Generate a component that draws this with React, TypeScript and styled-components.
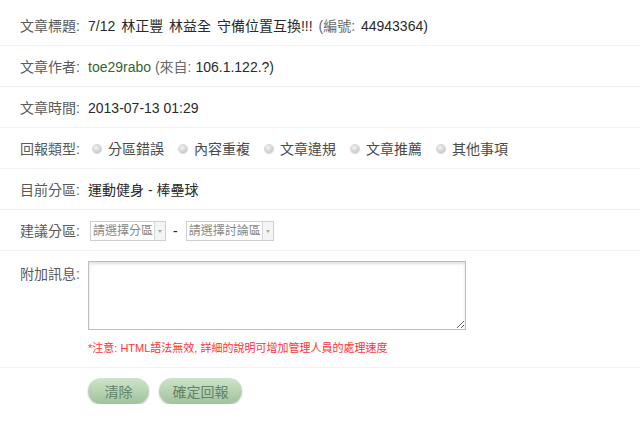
import styled, { createGlobalStyle } from 'styled-components';

const GlobalStyle = createGlobalStyle`
  body {
    margin: 0;
    background: #fff;
    font-family: 'Liberation Sans', Arial, 'Noto Sans CJK TC', sans-serif;
    font-size: 14px;
    color: #222;
  }
`;

const reportTypes = ['分區錯誤', '內容重複', '文章違規', '文章推薦', '其他事項'];

export default function App() {
  return (
    <>
      <GlobalStyle />
      <Form>
        <Row>
          <Label>文章標題:</Label>
          <Value $spaced>
            7/12 林正豐 林益全 守備位置互換!!! <Muted>(編號: </Muted>44943364)
          </Value>
        </Row>
        <Row>
          <Label>文章作者:</Label>
          <Value>
            <Author>toe29rabo</Author> <Muted>(來自: </Muted>106.1.122.?)
          </Value>
        </Row>
        <Row>
          <Label>文章時間:</Label>
          <Value>2013-07-13 01:29</Value>
        </Row>
        <Row>
          <Label>回報類型:</Label>
          <Controls>
            {reportTypes.map((type) => (
              <Option key={type}>
                <RadioDot />
                {type}
              </Option>
            ))}
          </Controls>
        </Row>
        <Row>
          <Label>目前分區:</Label>
          <Value>運動健身 - 棒壘球</Value>
        </Row>
        <Row>
          <Label>建議分區:</Label>
          <Controls>
            <FakeSelect>
              <SelectText>請選擇分區</SelectText>
              <SelectArrow />
            </FakeSelect>
            <Dash>-</Dash>
            <FakeSelect>
              <SelectText>請選擇討論區</SelectText>
              <SelectArrow />
            </FakeSelect>
          </Controls>
        </Row>
        <MessageRow>
          <Label>附加訊息:</Label>
          <MessageCol>
            <TextArea />
            <Note>*注意: HTML語法無效, 詳細的說明可增加管理人員的處理速度</Note>
          </MessageCol>
        </MessageRow>
        <ButtonRow>
          <Button $width={61}>清除</Button>
          <Button $width={83}>確定回報</Button>
        </ButtonRow>
      </Form>
    </>
  );
}

const Form = styled.form`
  display: flex;
  flex-direction: column;
  padding-top: 5px;
`;

const Row = styled.div`
  display: flex;
  align-items: center;
  height: 41px;
  padding-top: 1px;
  box-sizing: border-box;
  border-bottom: 1px solid #f2f2f2;
  line-height: 20px;
`;

const Label = styled.div`
  flex-shrink: 0;
  width: 72px;
  padding: 0 8px 0 8px;
  text-align: right;
  color: #5a5a5a;
  white-space: nowrap;
`;

const Value = styled.div<{ $spaced?: boolean }>`
  color: #2a2a2a;
  white-space: nowrap;
  word-spacing: ${(p) => (p.$spaced ? '2px' : '0')};
`;

const Controls = styled.div`
  display: flex;
  align-items: center;
`;

const Muted = styled.span`
  color: #6a6a6a;
`;

const Author = styled.span`
  color: #336633;
`;

const Option = styled.label`
  display: flex;
  align-items: center;
  margin-right: 10px;
  color: #4a4a4a;
`;

const RadioDot = styled.span`
  width: 8px;
  height: 8px;
  border-radius: 50%;
  margin: 0 7px 0 5px;
  background: radial-gradient(circle at 40% 35%, #f4f4f4 0%, #cfcfcf 60%, #b8b8b8 100%);
  box-shadow: 0 0 0 1px #d6d6d6;
`;

const FakeSelect = styled.div`
  display: flex;
  align-items: stretch;
  height: 20px;
  box-sizing: border-box;
  border: 1px solid #cfcfcf;
  margin-left: 2px;
`;

const SelectText = styled.span`
  padding: 0 1px 0 2px;
  color: #8a8a8a;
  font-size: 12px;
  line-height: 18px;
`;

const SelectArrow = styled.span`
  width: 10px;
  border-left: 1px solid #d8d8d8;
  background: #f4f4f4;
  position: relative;
  &::after {
    content: '';
    position: absolute;
    left: 3px;
    top: 8px;
    border-left: 2px solid transparent;
    border-right: 2px solid transparent;
    border-top: 3px solid #aaa;
  }
`;

const Dash = styled.span`
  margin: 0 6px 0 7px;
  color: #222;
`;

const MessageRow = styled.div`
  display: flex;
  align-items: flex-start;
  padding: 10px 0 0;
  border-bottom: 1px solid #f2f2f2;
  height: 117px;
  box-sizing: border-box;
  line-height: 20px;

  & > ${Label} {
    padding-top: 3px;
  }
`;

const MessageCol = styled.div`
  display: flex;
  flex-direction: column;
`;

const TextArea = styled.textarea`
  width: 378px;
  height: 69px;
  box-sizing: border-box;
  border: 1px solid #bdbdbd;
  box-shadow: inset 0 2px 3px rgba(0, 0, 0, 0.12);
  margin: 0;
  resize: both;
  outline: none;
`;

const Note = styled.div`
  margin-top: 10px;
  color: #ff3333;
  font-size: 11px;
  line-height: 16px;
`;

const ButtonRow = styled.div`
  display: flex;
  gap: 10px;
  padding: 10px 0 0 88px;
`;

const Button = styled.button<{ $width: number }>`
  width: ${(p) => p.$width}px;
  height: 26px;
  padding: 0;
  border: none;
  border-radius: 13px;
  background: linear-gradient(#cde4c9, #a0c29c);
  box-shadow: 0 1px 2px rgba(0, 0, 0, 0.25);
  color: #64836a;
  font-family: 'Liberation Sans', 'Noto Sans CJK TC', sans-serif;
  font-size: 14px;
`;
